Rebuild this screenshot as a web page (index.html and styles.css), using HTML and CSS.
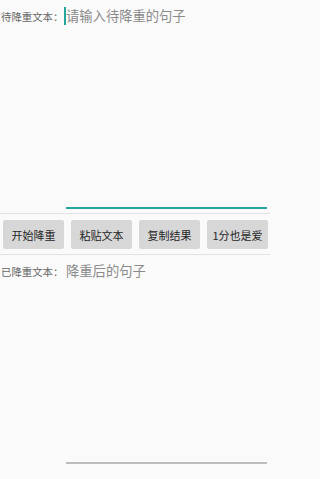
FILE: index.html
```html
<!DOCTYPE html>
<html lang="zh">
<head>
<meta charset="utf-8">
<link rel="stylesheet" href="styles.css">
</head>
<body>
<div class="screen">
  <div class="field">
    <div class="label">待降重文本：</div>
    <div class="input focused"><span class="caret"></span><span class="hint">请输入待降重的句子</span></div>
  </div>
  <div class="sep sep-top"></div>
  <div class="buttons">
    <button class="btn">开始降重</button>
    <button class="btn">粘贴文本</button>
    <button class="btn">复制结果</button>
    <button class="btn btn-last">1分也是爱</button>
  </div>
  <div class="sep sep-bottom"></div>
  <div class="field">
    <div class="label">已降重文本：</div>
    <div class="input"><span class="hint">降重后的句子</span></div>
  </div>
</div>
</body>
</html>
```

FILE: styles.css
```css
html, body {
  margin: 0;
  padding: 0;
  background: #fafafa;
}
.screen {
  width: 270px;
  height: 479px;
  overflow: hidden;
  background: #fafafa;
  font-family: "Noto Sans CJK SC", "Noto Sans", sans-serif;
}
.field {
  display: flex;
  height: 209px;
}
.label {
  width: 64px;
  padding-left: 1px;
  padding-top: 8px;
  font-size: 10.4px;
  line-height: 18px;
  color: #666666;
  white-space: nowrap;
  box-sizing: border-box;
}
.input {
  flex: 1;
  margin-left: 2px;
  margin-right: 3px;
  padding-top: 7px;
  border-bottom: 2px solid #bdbdbd;
  font-size: 13.3px;
  line-height: 18px;
  box-sizing: border-box;
}
.input.focused {
  border-bottom-color: #26a69a;
}
.caret {
  display: inline-block;
  width: 2px;
  height: 18px;
  background: #26a69a;
  vertical-align: top;
  margin-left: -2px;
}
.hint {
  color: #8a8a8a;
}
.sep {
  height: 1px;
  background: #e2e2e2;
}
.sep-top {
  margin-top: 4px;
}
.buttons {
  display: flex;
  gap: 7px;
  padding: 0 2px 0 3px;
  margin-top: 6px;
  height: 29px;
}
.btn {
  flex: 1;
  border: none;
  border-radius: 2px;
  background: #d7d7d7;
  color: #262626;
  font-family: "Noto Sans CJK SC", "Noto Sans", sans-serif;
  font-size: 11px;
  padding: 0;
  margin: 0;
}
.sep-bottom {
  margin-top: 5px;
}
```
